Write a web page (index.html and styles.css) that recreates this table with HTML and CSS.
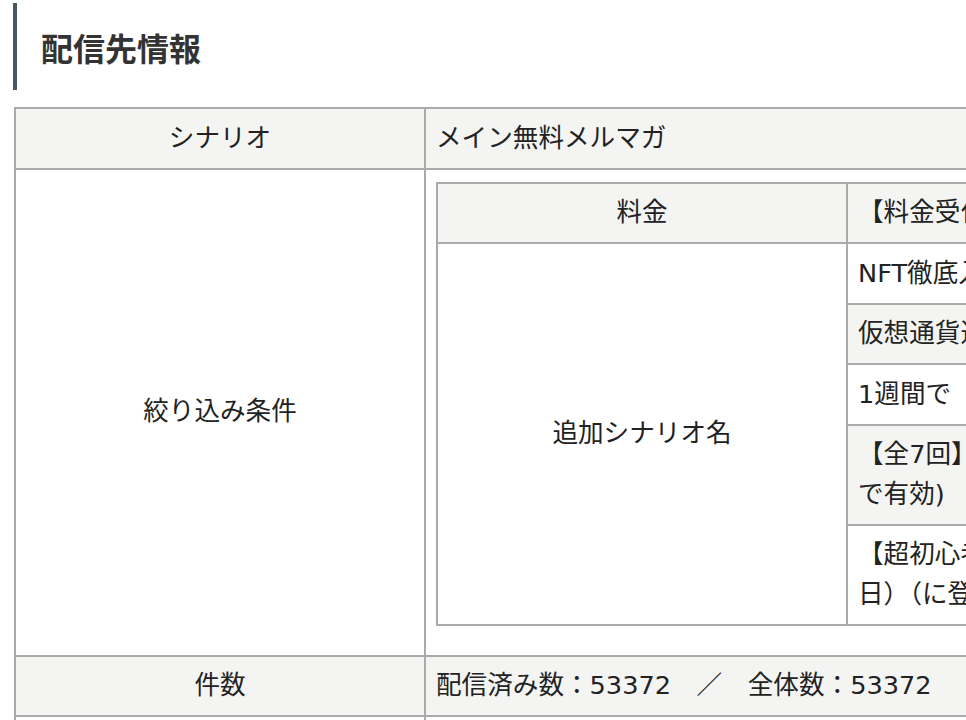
FILE: index.html
```html
<!DOCTYPE html>
<html lang="ja">
<head>
<meta charset="utf-8">
<title>配信先情報</title>
<link rel="stylesheet" href="styles.css">
</head>
<body>
<div class="page">
  <h2 class="section-title">配信先情報</h2>
  <table class="info-table">
    <colgroup><col class="label-col"><col class="value-col"></colgroup>
    <tbody>
      <tr><th>シナリオ</th><td>メイン無料メルマガ</td></tr>
      <tr>
        <th>絞り込み条件</th>
        <td class="nested-cell">
          <table class="sub-table">
            <colgroup><col class="label-col"><col class="sub-value-col"></colgroup>
            <tbody>
              <tr><th>料金</th><td>【料金受付】NFT講座お申し込み</td></tr>
              <tr><th rowspan="5">追加シナリオ名</th><td>NFT徹底入門講座シナリオ</td></tr>
              <tr><td>仮想通貨運用講座シナリオ</td></tr>
              <tr><td>1週間で　仮想通貨の基礎を学ぶ</td></tr>
              <tr><td>【全7回】仮想通貨投資オンライン講座（2023年12月31日まで<br>で有効)</td></tr>
              <tr><td>【超初心者向け】NFT入門セミナー（2023年1月15日（日）<br>日）（に登録した方）</td></tr>
            </tbody>
          </table>
        </td>
      </tr>
      <tr><th>件数</th><td>配信済み数：53372　／　全体数：53372</td></tr>
      <tr><th>配信日時</th><td>2023年01月10日 20:00</td></tr>
    </tbody>
  </table>
</div>
</body>
</html>
```
FILE: styles.css
```css
html, body {
  margin: 0;
  padding: 0;
  background: #ffffff;
}

body {
  font-family: "DejaVu Sans", "Noto Sans CJK JP", sans-serif;
  color: #222222;
  width: 966px;
  height: 720px;
  overflow: hidden;
}

.page {
  padding: 3px 0 0 13px;
  overflow: hidden;
}

.section-title {
  margin: 0 0 17px 0;
  border-left: 4px solid #455963;
  padding: 20px 0 19px 24px;
  font-family: "Noto Sans CJK JP", sans-serif;
  font-size: 32px;
  line-height: 48px;
  font-weight: bold;
  color: #333333;
}

.info-table,
.sub-table {
  border-collapse: collapse;
  table-layout: fixed;
  font-size: 25.6px;
  line-height: 39.5px;
}

.info-table {
  width: 1500px;
  margin-left: 1px;
}

.sub-table {
  width: 1050px;
  margin-bottom: 19px;
}

.label-col {
  width: 410px;
}

.info-table th,
.info-table td {
  border: 2px solid #aaaaaa;
  padding: 9.5px 10px;
  vertical-align: middle;
  background: #ffffff;
}

.info-table th {
  font-weight: normal;
  text-align: center;
}

.info-table td {
  text-align: left;
  white-space: nowrap;
}

.info-table > tbody > tr:nth-child(odd) > th,
.info-table > tbody > tr:nth-child(odd) > td,
.sub-table > tbody > tr:nth-child(odd) > th,
.sub-table > tbody > tr:nth-child(odd) > td {
  background: #f4f5f3;
}

.info-table td.nested-cell {
  padding: 12px 10px 10px 10px;
}
```
